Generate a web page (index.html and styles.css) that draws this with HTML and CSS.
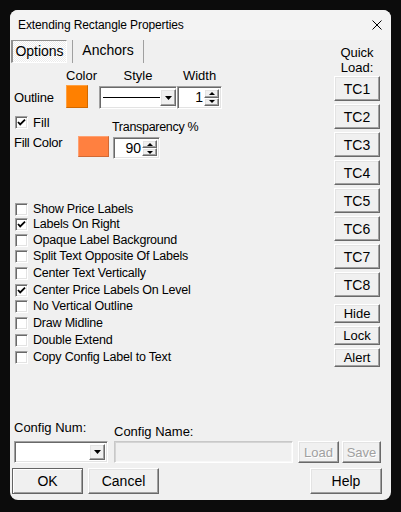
FILE: index.html
```html
<!DOCTYPE html>
<html>
<head>
<meta charset="utf-8">
<link rel="stylesheet" href="styles.css">
</head>
<body>
<div class="window">
  <div class="titlebar">
    <span class="title">Extending Rectangle Properties</span>
    <svg class="close" width="10" height="10" viewBox="0 0 10 10"><path d="M0.5 0.5 L9.5 9.5 M9.5 0.5 L0.5 9.5" stroke="#000" stroke-width="1"/></svg>
  </div>
  <div class="main">
    <div class="left">
      <div class="tabs">
        <div class="tab tab-options">Options</div>
        <div class="tab tab-anchors">Anchors</div>
      </div>
      <div class="labels-row">
        <div class="sp56"></div>
        <div class="lbl-color">Color</div>
        <div class="lbl-style">Style</div>
        <div class="lbl-width">Width</div>
      </div>
      <div class="controls-row">
        <div class="outline-lbl">Outline</div>
        <div class="swatch swatch-outline"></div>
        <div class="combo style-combo sunken">
          <div class="combo-field"><div class="style-line"></div></div>
          <div class="drop btn"><svg width="7" height="4" viewBox="0 0 7 4"><polygon points="0,0 7,0 3.5,4" fill="#000"/></svg></div>
        </div>
        <div class="spin width-spin sunken">
          <div class="val">1</div>
          <div class="arrows">
            <div class="arr btn"><span class="tri-up"></span></div>
            <div class="arr btn"><span class="tri-down"></span></div>
          </div>
        </div>
      </div>
      <div class="fill-row">
        <div class="fill-check">
          <span class="cb"><svg width="11" height="11" viewBox="0 0 11 11"><path d="M2 5 L4.2 7.4 L9 2.6" stroke="#000" stroke-width="1.8" fill="none"/></svg></span>
          <span>Fill</span>
        </div>
        <div class="transp">Transparency %</div>
      </div>
      <div class="fillcolor-row">
        <div class="fillcolor-lbl">Fill Color</div>
        <div class="swatch swatch-fill"></div>
        <div class="spin fill-spin sunken">
          <div class="val">90</div>
          <div class="arrows">
            <div class="arr btn"><span class="tri-up"></span></div>
            <div class="arr btn"><span class="tri-down"></span></div>
          </div>
        </div>
      </div>
      <div class="cb-list">
        <div class="cb-row h15"><span class="cb"></span><span>Show Price Labels</span></div>
        <div class="cb-row h15"><span class="cb"><svg width="11" height="11" viewBox="0 0 11 11"><path d="M2 5 L4.2 7.4 L9 2.6" stroke="#000" stroke-width="1.8" fill="none"/></svg></span><span>Labels On Right</span></div>
        <div class="cb-row h16"><span class="cb"></span><span>Opaque Label Background</span></div>
        <div class="cb-row h17"><span class="cb"></span><span>Split Text Opposite Of Labels</span></div>
        <div class="cb-row h17"><span class="cb"></span><span>Center Text Vertically</span></div>
        <div class="cb-row h16"><span class="cb"><svg width="11" height="11" viewBox="0 0 11 11"><path d="M2 5 L4.2 7.4 L9 2.6" stroke="#000" stroke-width="1.8" fill="none"/></svg></span><span>Center Price Labels On Level</span></div>
        <div class="cb-row h17"><span class="cb"></span><span>No Vertical Outline</span></div>
        <div class="cb-row h17"><span class="cb"></span><span>Draw Midline</span></div>
        <div class="cb-row h17"><span class="cb"></span><span>Double Extend</span></div>
        <div class="cb-row h17"><span class="cb"></span><span>Copy Config Label to Text</span></div>
      </div>
    </div>
    <div class="right">
      <div class="ql">Quick<br>Load:</div>
      <button class="btn tc first">TC1</button>
      <button class="btn tc">TC2</button>
      <button class="btn tc">TC3</button>
      <button class="btn tc">TC4</button>
      <button class="btn tc">TC5</button>
      <button class="btn tc">TC6</button>
      <button class="btn tc">TC7</button>
      <button class="btn tc">TC8</button>
      <button class="btn small hide">Hide</button>
      <button class="btn small">Lock</button>
      <button class="btn small">Alert</button>
    </div>
  </div>
  <div class="config-labels">
    <div class="cn-lbl">Config Num:</div>
    <div class="cname-lbl">Config Name:</div>
  </div>
  <div class="config-row">
    <div class="combo cnum-combo sunken">
      <div class="combo-field"></div>
      <div class="drop btn"><svg width="7" height="4" viewBox="0 0 7 4"><polygon points="0,0 7,0 3.5,4" fill="#000"/></svg></div>
    </div>
    <div class="cname-box"></div>
    <button class="btn disabled load">Load</button>
    <button class="btn disabled save">Save</button>
  </div>
  <div class="footer">
    <button class="btn default ok">OK</button>
    <button class="btn cancel">Cancel</button>
    <button class="btn help">Help</button>
  </div>
</div>
</body>
</html>
```

FILE: styles.css
```css
html, body {
  margin: 0;
}
body {
  background: #0c0c0c;
  padding: 10px 0 0 10px;
  width: 401px;
  height: 512px;
  box-sizing: border-box;
  overflow: hidden;
  font-family: "Liberation Sans", Arial, sans-serif;
  font-size: 13px;
  line-height: 15px;
  color: #000;
}
.window {
  width: 381px;
  height: 490px;
  background: #f0f0f0;
  border-radius: 8px;
  display: flex;
  flex-direction: column;
  overflow: hidden;
}
.titlebar {
  height: 30px;
  flex: none;
  display: flex;
  align-items: center;
  justify-content: space-between;
  padding: 0 9px 0 8px;
  font-size: 12px;
  background: #f3f3f3;
}
.title { letter-spacing: -0.1px; }
.close { display: block; }
.main {
  height: 380px;
  flex: none;
  display: flex;
}
.left {
  flex: 1;
  display: flex;
  flex-direction: column;
}
.right {
  width: 46px;
  margin-right: 11px;
  display: flex;
  flex-direction: column;
  padding-top: 5px;
}

/* tabs */
.tabs {
  height: 23px;
  display: flex;
}
.tab {
  box-sizing: border-box;
  height: 23px;
  display: flex;
  align-items: center;
  justify-content: center;
  font-size: 14px;
}
.tab-options {
  margin-left: 1px;
  width: 56px;
  border-top: 1px solid #909090;
  border-left: 2px solid #909090;
  border-right: 1px solid #ffffff;
  border-bottom: 1px solid #ffffff;
  background: repeating-conic-gradient(#ffffff 0 25%, #ebebeb 0 50%) 0 0 / 2px 2px;
}
.tab-anchors {
  margin-left: 5px;
  width: 72px;
  border-left: 1px solid #a0a0a0;
  border-right: 1px solid #a0a0a0;
  padding-bottom: 2px;
}

/* generic controls */
.btn {
  box-sizing: border-box;
  background: #f0f0f0;
  border: 1px solid;
  border-color: #ffffff #696969 #696969 #ffffff;
  box-shadow: inset -1px -1px #a0a0a0, inset 1px 1px #e3e3e3;
  display: flex;
  align-items: center;
  justify-content: center;
  font-family: inherit;
  font-size: 13px;
  color: #000;
  padding: 0;
  margin: 0;
}
.sunken {
  box-sizing: border-box;
  background: #ffffff;
  border: 1px solid;
  border-color: #a0a0a0 #ffffff #ffffff #a0a0a0;
  box-shadow: inset 1px 1px #696969, inset -1px -1px #e3e3e3;
}
.swatch {
  box-sizing: border-box;
  box-shadow: inset -1px -1px rgba(0,0,0,0.18), inset 1px 1px rgba(255,255,255,0.25);
}
.combo {
  display: flex;
  padding: 2px;
}
.combo-field {
  flex: 1;
  display: flex;
  align-items: center;
}
.drop {
  width: 16px;
  flex: none;
}
.drop svg { display: block; }
.spin {
  display: flex;
  padding: 2px;
}
.spin .val {
  flex: 1;
  text-align: right;
  padding-right: 1px;
  font-size: 14px;
  display: flex;
  align-items: center;
  justify-content: flex-end;
}
.arrows {
  width: 15px;
  display: flex;
  flex-direction: column;
}
.arr {
  flex: 1;
}
.tri-up {
  width: 0;
  height: 0;
  border-left: 3px solid transparent;
  border-right: 3px solid transparent;
  border-bottom: 3px solid #000;
}
.tri-down {
  width: 0;
  height: 0;
  border-left: 3px solid transparent;
  border-right: 3px solid transparent;
  border-top: 3px solid #000;
}
.cb {
  box-sizing: border-box;
  width: 13px;
  height: 13px;
  flex: none;
  background: #fff;
  border: 1px solid;
  border-color: #a0a0a0 #ffffff #ffffff #a0a0a0;
  box-shadow: inset 1px 1px #696969, inset -1px -1px #e3e3e3;
  display: flex;
  align-items: center;
  justify-content: center;
}
.cb svg { display: block; }

/* outline section */
.labels-row {
  display: flex;
  margin-top: 5px;
  height: 15px;
}
.sp56 { width: 56px; }
.lbl-color { width: 33px; }
.lbl-style { width: 78px; text-align: center; }
.lbl-width { width: 45px; text-align: center; }
.controls-row {
  display: flex;
  align-items: flex-start;
  margin-top: 2px;
  height: 25px;
}
.outline-lbl {
  width: 52px;
  margin-left: 4px;
  align-self: center;
  letter-spacing: -0.2px;
}
.swatch-outline {
  width: 22px;
  height: 23px;
  background: #ff8000;
}
.style-combo {
  margin-left: 11px;
  margin-top: 1px;
  width: 78px;
  height: 23px;
}
.style-line {
  width: 57px;
  height: 1px;
  background: #000;
  margin-left: 1px;
}
.width-spin {
  margin-top: 1px;
  width: 45px;
  height: 23px;
}

/* fill */
.fill-row {
  display: flex;
  align-items: flex-start;
  margin-top: 6px;
  height: 19px;
}
.fill-check {
  margin-left: 5px;
  width: 97px;
  height: 13px;
  display: flex;
  align-items: center;
  gap: 5px;
}
.transp {
  margin-top: 4px;
  font-size: 12.5px;
  letter-spacing: -0.3px;
}
.fillcolor-row {
  display: flex;
  align-items: flex-start;
  height: 25px;
}
.fillcolor-lbl {
  margin-left: 4px;
  width: 64px;
  letter-spacing: -0.3px;
}
.swatch-fill {
  width: 31px;
  height: 21px;
  margin-top: 1px;
  background: #ff8040;
}
.fill-spin {
  margin-left: 4px;
  margin-top: 2px;
  width: 47px;
  height: 22px;
}

/* checkbox list */
.cb-list {
  margin-top: 42px;
  display: flex;
  flex-direction: column;
  font-size: 12.5px;
  letter-spacing: -0.2px;
}
.cb-row {
  display: flex;
  align-items: center;
  gap: 5px;
  padding-left: 5px;
}
.h15 { height: 15px; }
.h16 { height: 16px; }
.h17 { height: 17px; }

/* right column */
.ql {
  text-align: center;
  line-height: 15px;
  font-size: 13px;
}
.tc {
  height: 25px;
  margin-top: 3px;
  font-size: 14px;
}
.tc.first { margin-top: 1px; }
.small {
  height: 19px;
  margin-top: 3px;
}
.small.hide { margin-top: 7px; }

/* config */
.config-labels {
  display: flex;
  align-items: flex-start;
  height: 21px;
  flex: none;
}
.cn-lbl {
  margin-left: 4px;
  width: 100px;
}
.cname-lbl {
  margin-top: 4px;
}
.config-row {
  display: flex;
  height: 22px;
  flex: none;
}
.cnum-combo {
  margin-left: 4px;
  width: 94px;
  height: 22px;
}
.cname-box {
  box-sizing: border-box;
  margin-left: 6px;
  width: 179px;
  height: 22px;
  border: 1px solid;
  border-color: #c8c8c8 #ffffff #ffffff #c8c8c8;
  box-shadow: inset 1px 1px #d4d4d4, inset -1px -1px #f8f8f8;
  background: #f0f0f0;
}
.disabled {
  color: #a0a0a0;
  text-shadow: 1px 1px #ffffff;
  height: 22px;
}
.load { margin-left: 5px; width: 41px; }
.save { margin-left: 3px; width: 39px; }
.footer {
  display: flex;
  margin-top: 5px;
  height: 26px;
  flex: none;
}
.footer .btn {
  height: 26px;
  font-size: 14px;
}
.ok {
  margin-left: 2px;
  width: 71px;
}
.default {
  border-color: #646464;
  box-shadow: inset 1px 1px #ffffff, inset -1px -1px #a0a0a0;
}
.cancel {
  margin-left: 5px;
  width: 71px;
}
.help {
  margin-left: auto;
  margin-right: 9px;
  width: 72px;
}
```
